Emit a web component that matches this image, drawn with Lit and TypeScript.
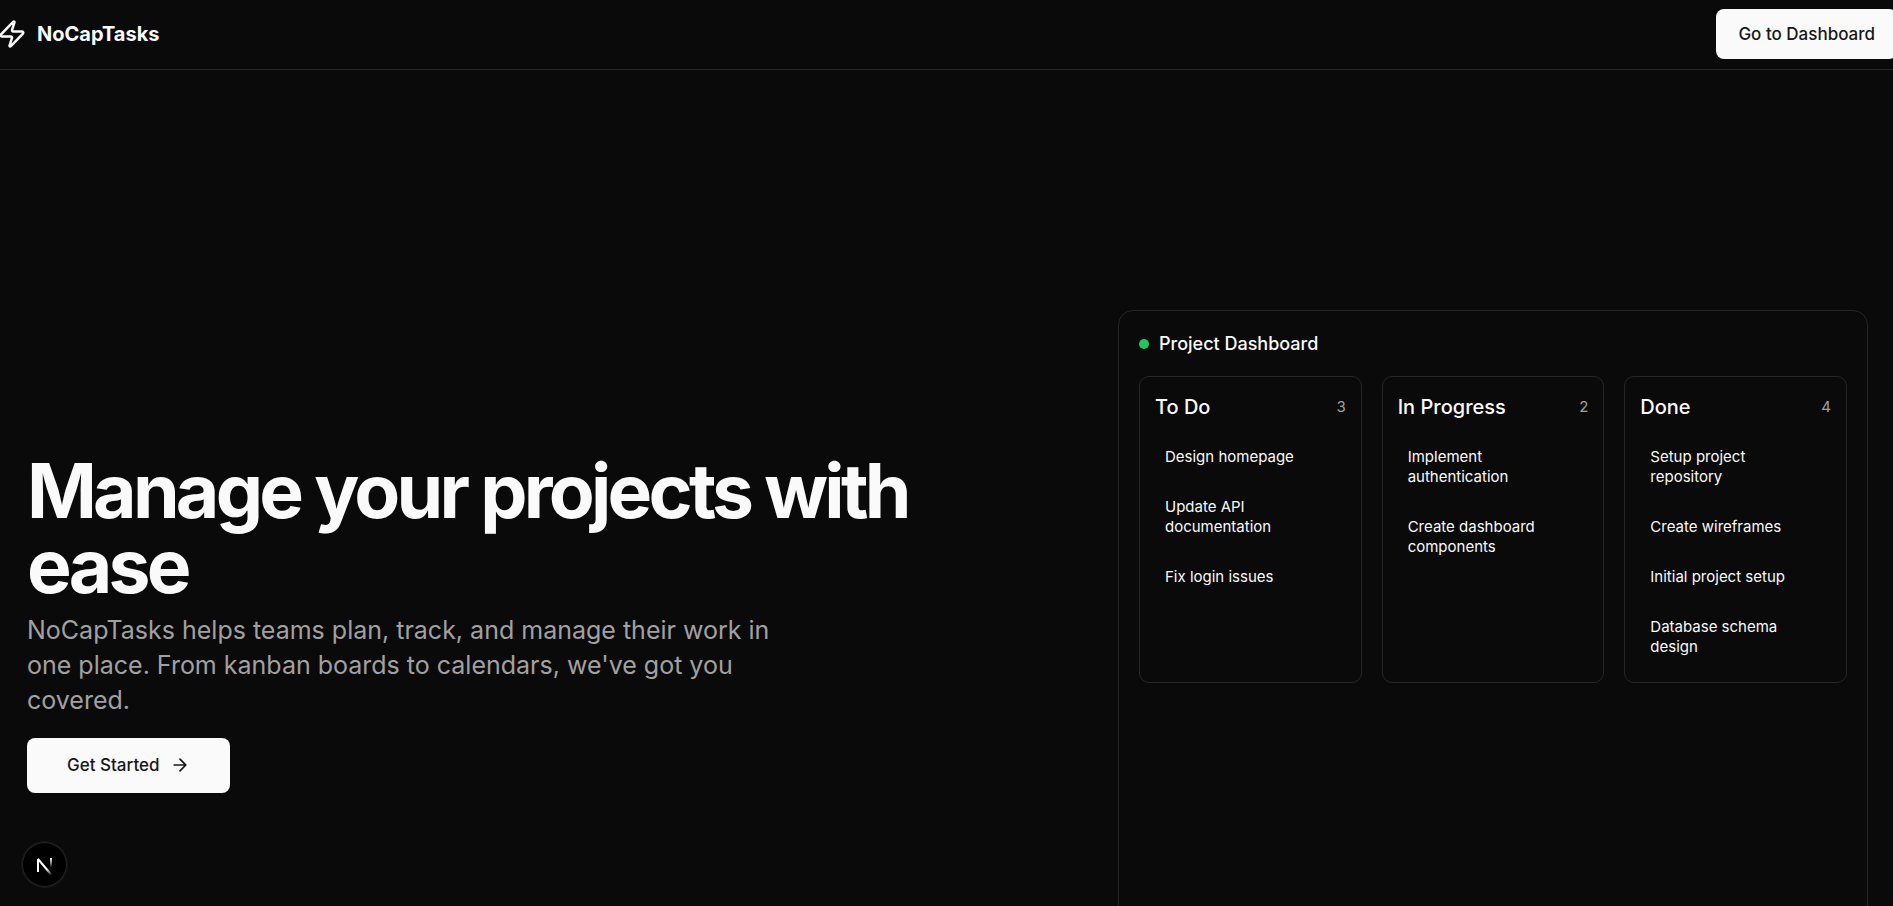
import { LitElement, html, css, svg } from "lit";
import { customElement, property } from "lit/decorators.js";

interface Column {
  title: string;
  tasks: string[];
}

const COLUMNS: Column[] = [
  { title: "To Do", tasks: ["Design homepage", "Update API documentation", "Fix login issues"] },
  { title: "In Progress", tasks: ["Implement authentication", "Create dashboard components"] },
  {
    title: "Done",
    tasks: ["Setup project repository", "Create wireframes", "Initial project setup", "Database schema design"],
  },
];

const zapShape = svg`<path d="M4 14a1 1 0 0 1-.78-1.63l9.9-10.2a.5.5 0 0 1 .86.46l-1.92 6.02A1 1 0 0 0 13 10h7a1 1 0 0 1 .78 1.63l-9.9 10.2a.5.5 0 0 1-.86-.46l1.92-6.02A1 1 0 0 0 11 14z"/>`;

@customElement("board-column")
export class BoardColumn extends LitElement {
  @property() heading = "";
  @property({ attribute: false }) tasks: string[] = [];

  static styles = css`
    :host {
      display: block;
      box-sizing: border-box;
      border: 1px solid #262626;
      border-radius: 10px;
      padding: 15px;
    }
    .head {
      display: flex;
      align-items: center;
      justify-content: space-between;
      margin-bottom: 15px;
    }
    .title {
      margin: 0;
      font-size: 20px;
      line-height: 30px;
      font-weight: 500;
    }
    .count {
      font-size: 15px;
      line-height: 20px;
      color: #a1a1a1;
    }
    .list {
      display: flex;
      flex-direction: column;
      gap: 10px;
      margin: 0;
      padding: 0;
      list-style: none;
    }
    .task {
      padding: 10px;
      font-size: 15px;
      line-height: 20px;
    }
  `;

  render() {
    return html`
      <div class="head">
        <h3 class="title">${this.heading}</h3>
        <span class="count">${this.tasks.length}</span>
      </div>
      <ul class="list">
        ${this.tasks.map((task) => html`<li class="task">${task}</li>`)}
      </ul>
    `;
  }
}

@customElement("app-root")
export class AppRoot extends LitElement {
  static styles = css`
    :host {
      display: block;
      min-height: 100vh;
      overflow-x: clip;
      background: #0a0a0a;
      color: #fafafa;
      font-family: Inter, "Liberation Sans", sans-serif;
      font-size: 20px;
    }
    .icon {
      flex: none;
      fill: none;
      stroke: currentColor;
      stroke-width: 2;
      stroke-linecap: round;
      stroke-linejoin: round;
    }
    .topbar {
      border-bottom: 1px solid #262626;
    }
    .topbar-inner {
      display: flex;
      align-items: center;
      justify-content: space-between;
      margin: 0 -4px 0 -3px;
      padding: 9px 0 10px;
    }
    .brand {
      display: flex;
      align-items: center;
      gap: 10px;
      color: inherit;
      text-decoration: none;
      font-weight: 700;
      line-height: 30px;
    }
    .button {
      display: inline-flex;
      align-items: center;
      justify-content: center;
      gap: 10px;
      border: 0;
      border-radius: 8px;
      background: #fafafa;
      color: #171717;
      font: inherit;
      font-size: 17px;
      font-weight: 500;
      line-height: 25px;
      padding: 13px 22px 12px;
      cursor: pointer;
    }
    .button-large {
      padding: 15px 40px;
    }
    .hero {
      display: grid;
      grid-template-columns: minmax(0, 1fr) 750px;
      gap: 60px;
      align-items: center;
      padding: 240px 25px 240px 27px;
    }
    .copy {
      display: flex;
      flex-direction: column;
      align-items: flex-start;
    }
    .headline {
      margin: 0 0 10px;
      font-size: 75px;
      line-height: 75px;
      font-weight: 700;
      letter-spacing: -0.05em;
    }
    .lead {
      margin: 0 0 20px;
      max-width: 750px;
      font-size: 25px;
      line-height: 35px;
      color: #a1a1a1;
    }
    .card {
      box-sizing: border-box;
      min-height: 625px;
      border: 1px solid #262626;
      border-radius: 15px;
      padding: 20px;
    }
    .card-head {
      display: flex;
      align-items: center;
      gap: 10px;
      margin-bottom: 20px;
    }
    .dot {
      width: 10px;
      height: 10px;
      border-radius: 50%;
      background: #22c55e;
    }
    .card-title {
      margin: 0;
      font-size: 18px;
      line-height: 25px;
      font-weight: 500;
    }
    .columns {
      display: grid;
      grid-template-columns: repeat(3, minmax(0, 1fr));
      gap: 20px;
    }
    .badge {
      position: fixed;
      left: 22px;
      bottom: 19px;
      display: grid;
      place-items: center;
      width: 45px;
      height: 45px;
      border: 0;
      border-radius: 50%;
      padding: 0;
      background: #000;
      box-shadow: 0 0 0 1px #171717, inset 0 0 0 1px #262626;
      cursor: pointer;
    }
    @media (max-width: 1400px) {
      .hero {
        grid-template-columns: minmax(0, 1fr);
        padding-top: 120px;
      }
    }
  `;

  render() {
    return html`
      <header class="topbar">
        <div class="topbar-inner">
          <a class="brand" href="#">
            <svg class="icon" width="30" height="30" viewBox="0 0 24 24" aria-hidden="true">${zapShape}</svg>
            <span>NoCapTasks</span>
          </a>
          <button class="button" type="button">Go to Dashboard</button>
        </div>
      </header>
      <main class="hero">
        <div class="copy">
          <h1 class="headline">Manage your projects with ease</h1>
          <p class="lead">
            NoCapTasks helps teams plan, track, and manage their work in one place. From kanban boards to calendars,
            we've got you covered.
          </p>
          <button class="button button-large" type="button">
            Get Started
            <svg class="icon" width="20" height="20" viewBox="0 0 24 24" aria-hidden="true">
              <path d="M5 12h14M12 5l7 7-7 7" />
            </svg>
          </button>
        </div>
        <section class="card" aria-labelledby="board-title">
          <div class="card-head">
            <span class="dot"></span>
            <h2 class="card-title" id="board-title">Project Dashboard</h2>
          </div>
          <div class="columns">
            ${COLUMNS.map((c) => html`<board-column .heading=${c.title} .tasks=${c.tasks}></board-column>`)}
          </div>
        </section>
      </main>
      <button class="badge" type="button" aria-label="Open developer tools">
        <svg width="45" height="45" viewBox="0 0 45 45" fill="none" aria-hidden="true">
          <defs>
            <linearGradient id="stem" x1="28" y1="16" x2="28" y2="26" gradientUnits="userSpaceOnUse">
              <stop stop-color="#fff" />
              <stop offset="1" stop-color="#fff" stop-opacity="0" />
            </linearGradient>
            <linearGradient id="slash" x1="25" y1="27" x2="30" y2="33" gradientUnits="userSpaceOnUse">
              <stop stop-color="#fff" />
              <stop offset="1" stop-color="#fff" stop-opacity="0" />
            </linearGradient>
          </defs>
          <path d="M16 30V17L29.5 33" stroke="url(#slash)" stroke-width="2" stroke-linejoin="bevel" />
          <path d="M29 16V26" stroke="url(#stem)" stroke-width="2" />
        </svg>
      </button>
    `;
  }
}
